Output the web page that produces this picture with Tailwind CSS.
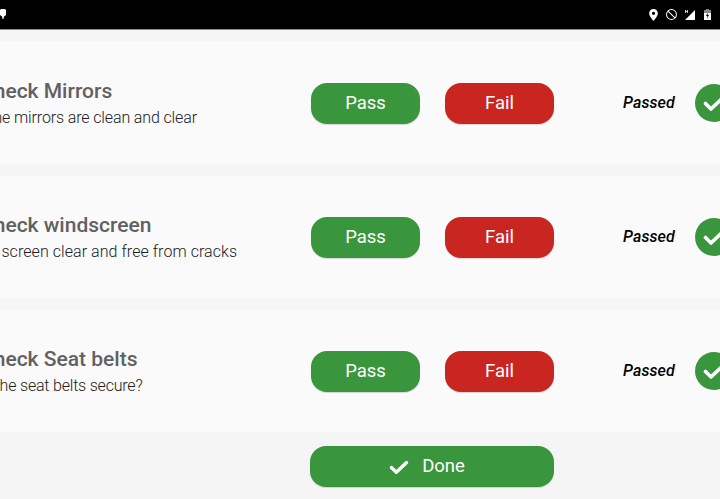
<!DOCTYPE html>
<html lang="en">
<head>
  <meta charset="UTF-8" />
  <title>Checks</title>
  <script src="https://cdn.jsdelivr.net/npm/@tailwindcss/browser@4"></script>
</head>
<body class="bg-[#f5f5f5] h-[499px] overflow-hidden font-['Roboto',sans-serif]">

  <!-- status bar -->
  <div class="h-[30px] bg-black border-b border-b-[#8a8a8a] flex items-center justify-between pr-[9px]">
    <svg class="w-[6px] h-[10px] -mt-[1px]" viewBox="0 0 6 10"><path fill="#fff" d="M1 0h4l1 1v5L4 7.500 3.500 10h-1L2 7.500 0 6V1z"/></svg>
    <div class="flex items-center">
      <svg class="w-[9px] h-[12px]" viewBox="4 1 16 22"><path fill="#fff" fill-rule="evenodd" d="M12 1a8 8 0 0 0-8 8c0 6 8 14 8 14s8-8 8-14a8 8 0 0 0-8-8zm0 5a3 3 0 1 1 0 6 3 3 0 0 1 0-6z"/></svg>
      <svg class="w-[11px] h-[11px] ml-[8px]" viewBox="0 0 24 24" fill="none" stroke="#fff" stroke-width="2.200"><circle cx="12" cy="12" r="10.800"/><path d="M4.500 4.500l15 15"/></svg>
      <svg class="w-[10px] h-[10px] ml-[8px]" viewBox="0 0 10 10"><path fill="#fff" d="M10 0v10H0z"/><path fill="#ccc" d="M0 0h1v1h1V0h1v3H2V2H1v1H0z"/></svg>
      <svg class="w-[7px] h-[11px] ml-[9px]" viewBox="0 0 7 11"><path fill="#888" d="M2 0h3v1h2v3H0V1h2z"/><path fill="#fff" fill-rule="evenodd" d="M0 4h7v7H0zM4 3L2 7h1.500L3 10l2-4H3.500z"/></svg>
    </div>
  </div>

  <div id="list" class="pt-[12px] flex flex-col gap-[12px]"></div>

  <!-- footer -->
  <div class="pl-[310px] pt-[14px]">
    <button class="w-[244px] h-[41px] pr-[10px] rounded-[16px] bg-[#3a963c] text-white text-[18.500px] font-[450] flex items-center justify-center gap-[13px] shadow-[0_1px_1px_rgba(0,0,0,0.15)]">
      <svg class="w-[20px] h-[16px]" viewBox="0 0 22 18"><path fill="none" stroke="#fff" stroke-width="3.800" stroke-linecap="round" stroke-linejoin="round" d="M2.500 9.500l5.500 5.500L19.500 4"/></svg>
      Done
    </button>
  </div>

  <script>
    const checks = [
      { title: "Check Mirrors", text: "The mirrors are clean and clear", textClass: "ml-[4px] tracking-[-0.13px]" },
      { title: "Check windscreen", text: "Is screen clear and free from cracks", textClass: "ml-[5px] tracking-[0.06px]" },
      { title: "Check Seat belts", text: "Is the seat belts secure?", textClass: "-ml-[1px] tracking-[-0.2px]" }
    ];

    document.getElementById('list').innerHTML = checks.map(check => `
      <div class="h-[122px] bg-[#fafafa] flex items-center overflow-hidden">
        <div class="w-[331px] shrink-0 -ml-[20px] whitespace-nowrap">
          <h2 class="text-[21px] leading-[28px] font-medium text-[#616161]">${check.title}</h2>
          <p class="mt-[2px] text-[16px] leading-[22px] font-light text-[#212121] ${check.textClass}">${check.text}</p>
        </div>
        <div class="flex gap-[25px] mt-[1px]">
          <button class="w-[109px] h-[41px] rounded-[16px] bg-[#3a963c] text-white text-[18.500px] font-[450] shadow-[0_1px_1px_rgba(0,0,0,0.15)]">Pass</button>
          <button class="w-[109px] h-[41px] rounded-[16px] bg-[#c92622] text-white text-[18.500px] font-[450] shadow-[0_1px_1px_rgba(0,0,0,0.15)]">Fail</button>
        </div>
        <span class="ml-[69px] w-[52px] text-[16px] font-medium italic tracking-[0.1px] text-black whitespace-nowrap">Passed</span>
        <span class="ml-[20px] w-[38px] h-[38px] shrink-0 rounded-full bg-[#3a963c] flex items-center justify-center">
          <svg class="w-[22px] h-[18px]" viewBox="0 0 22 18"><path fill="none" stroke="#fff" stroke-width="3.600" stroke-linecap="round" stroke-linejoin="round" d="M2.500 9.500l5.500 5.500L19.500 4"/></svg>
        </span>
      </div>
    `).join('');
  </script>
</body>
</html>
